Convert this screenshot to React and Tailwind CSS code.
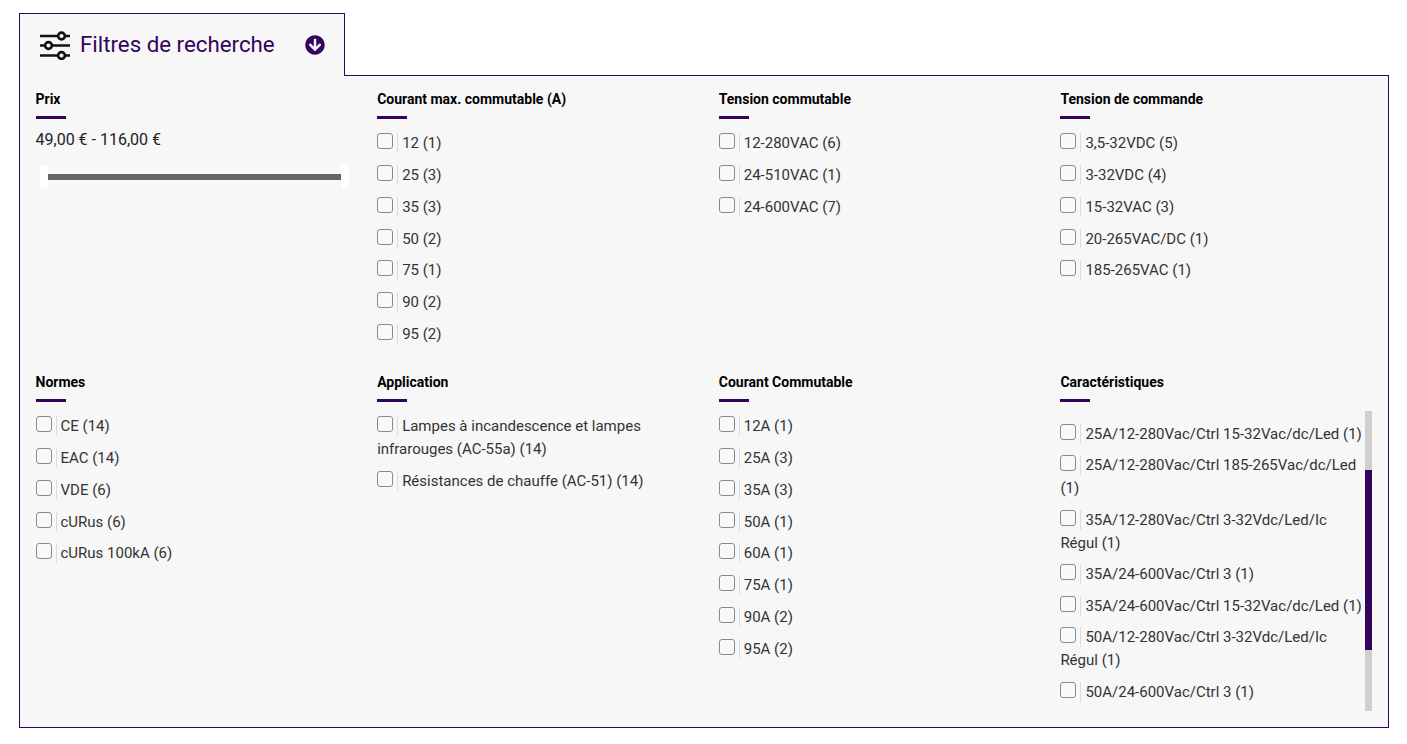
import React from "react";
import { FaArrowCircleDown } from "react-icons/fa";

function Item({ children, tight }) {
  return (
    <label className={tight ? "block mb-[8.5px] text-[15px] leading-[23px] text-[#333]" : "block mb-[8.8px] text-[15px] leading-[23px] text-[#333]"}>
      <input type="checkbox" className="appearance-none inline-block align-top mt-[1px] w-4 h-4 mr-1 border border-[#8a8a8a] rounded-[3px] bg-[#f9f9f9]" />
      <span className="inline-block align-top mt-[1px] w-px h-5 mr-1 bg-[#dcdcdc]" />
      {children}
    </label>
  );
}

function Heading({ children }) {
  return (
    <div className="mb-[13.300px]">
      <div className="text-sm leading-5 font-bold text-black">{children}</div>
      <div className="w-[30px] h-[3px] mt-[7px] bg-[#33045c]" />
    </div>
  );
}

function Group({ title, items }) {
  return (
    <div>
      <Heading>{title}</Heading>
      {items.map((t) => (
        <Item key={t}>{t}</Item>
      ))}
    </div>
  );
}

function FilterIcon() {
  return (
    <svg width="32" height="30" viewBox="0 0 32 30" fill="none" stroke="#111" strokeWidth="2.6">
      <path d="M1 6h18M26 6h5M1 15.500h5M13 15.500h18M1 25.500h18M26 25.500h5" />
      <circle cx="22.500" cy="6" r="3.400" />
      <circle cx="9.500" cy="15.500" r="3.400" />
      <circle cx="22.500" cy="25.500" r="3.400" />
    </svg>
  );
}

export default function App() {
  return (
    <div className="font-['Roboto',sans-serif] bg-white h-[744px] pt-[13px] pl-[19px] pr-[18px]">
      <div className="relative z-10 -mb-px flex items-center w-[326px] h-[63px] pl-[19px] pr-[19px] border border-b-0 border-[#33045c] bg-[#f7f7f8]">
        <FilterIcon />
        <span className="ml-[9px] text-[22.300px] text-[#33045c]">Filtres de recherche</span>
        <FaArrowCircleDown className="ml-auto text-[#33045c]" size={20} />
      </div>
      <div className="h-[653px] border border-[#33045c] bg-[#f7f7f8] pl-[15.500px] pr-4 pt-[13px] grid grid-cols-4 gap-x-[30px] content-start">
        <div className="h-[283px]">
          <Heading>Prix</Heading>
          <div className="-mt-[4.300px] text-base leading-[23px] text-[#222]">49,00 € - 116,00 €</div>
          <div className="relative h-[6px] mt-[23px] ml-[11px] mr-[6px] bg-[#666]">
            <span className="absolute -left-[7px] -top-[9px] w-2 h-6 rounded bg-white" />
            <span className="absolute -right-[8px] -top-[9px] w-2 h-6 rounded bg-white" />
          </div>
        </div>
        <Group title="Courant max. commutable (A)" items={["12 (1)", "25 (3)", "35 (3)", "50 (2)", "75 (1)", "90 (2)", "95 (2)"]} />
        <Group title="Tension commutable" items={["12-280VAC (6)", "24-510VAC (1)", "24-600VAC (7)"]} />
        <Group title="Tension de commande" items={["3,5-32VDC (5)", "3-32VDC (4)", "15-32VAC (3)", "20-265VAC/DC (1)", "185-265VAC (1)"]} />
        <Group title="Normes" items={["CE (14)", "EAC (14)", "VDE (6)", "cURus (6)", "cURus 100kA (6)"]} />
        <Group title="Application" items={["Lampes à incandescence et lampes infrarouges (AC-55a) (14)", "Résistances de chauffe (AC-51) (14)"]} />
        <Group title="Courant Commutable" items={["12A (1)", "25A (3)", "35A (3)", "50A (1)", "60A (1)", "75A (1)", "90A (2)", "95A (2)"]} />
        <div>
          <Heading>Caractéristiques</Heading>
          <div className="relative h-[300px] -mt-[4.300px] overflow-hidden pr-[7px] pt-[11.700px]">
            {[
              "25A/12-280Vac/Ctrl 15-32Vac/dc/Led (1)",
              "25A/12-280Vac/Ctrl 185-265Vac/dc/Led (1)",
              "35A/12-280Vac/Ctrl 3-32Vdc/Led/Ic Régul (1)",
              "35A/24-600Vac/Ctrl 3 (1)",
              "35A/24-600Vac/Ctrl 15-32Vac/dc/Led (1)",
              "50A/12-280Vac/Ctrl 3-32Vdc/Led/Ic Régul (1)",
              "50A/24-600Vac/Ctrl 3 (1)",
            ].map((t) => (
              <Item key={t} tight>{t}</Item>
            ))}
            <div className="absolute right-0 top-0 w-[7px] h-full bg-[#cfcfcf]">
              <div className="mt-[59px] h-[180px] bg-[#33045c]" />
            </div>
          </div>
        </div>
      </div>
    </div>
  );
}
